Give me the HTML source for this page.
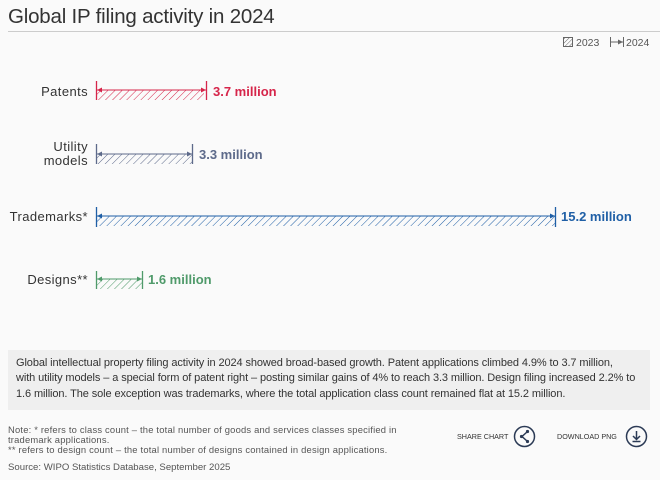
<!DOCTYPE html>
<html><head><meta charset="utf-8"><style>
*{margin:0;padding:0;box-sizing:border-box}
body{width:660px;height:480px;background:#fafafa;font-family:"Liberation Sans",sans-serif;color:#333;position:relative;overflow:hidden}
h1{position:absolute;left:8px;top:5px;font-size:20.5px;font-weight:normal;color:#333;letter-spacing:-0.2px}
.rule{position:absolute;left:8px;right:0;top:31px;height:1px;background:#ccc}
svg{position:absolute;left:0;top:0}
.box{position:absolute;left:8px;top:350px;width:642px;height:60px;background:#efefef;padding:6px 8px;font-size:11px;line-height:15.3px;color:#333;white-space:nowrap;letter-spacing:-0.1px}
.note{position:absolute;left:8px;top:425px;font-size:9.4px;line-height:10px;color:#555;white-space:nowrap;letter-spacing:0.2px}
.src{position:absolute;left:8px;top:462px;font-size:9.6px;color:#555}
.btn{position:absolute;top:432px;font-size:7.2px;color:#333}
</style></head><body>
<h1>Global IP filing activity in 2024</h1>
<div class="rule"></div>
<svg width="660" height="480">
<defs>
<pattern id="h1" width="5" height="5" patternUnits="userSpaceOnUse" patternTransform="rotate(45)"><line x1="0" y1="0" x2="0" y2="5" stroke="#d6254a" stroke-width="1"/></pattern>
<pattern id="h2" width="5" height="5" patternUnits="userSpaceOnUse" patternTransform="rotate(45)"><line x1="0" y1="0" x2="0" y2="5" stroke="#5d6a8a" stroke-width="1"/></pattern>
<pattern id="h3" width="5" height="5" patternUnits="userSpaceOnUse" patternTransform="rotate(45)"><line x1="0" y1="0" x2="0" y2="5" stroke="#1f5fa6" stroke-width="1"/></pattern>
<pattern id="h4" width="5" height="5" patternUnits="userSpaceOnUse" patternTransform="rotate(45)"><line x1="0" y1="0" x2="0" y2="5" stroke="#4f9a6a" stroke-width="1"/></pattern>
<pattern id="hl" width="3" height="3" patternUnits="userSpaceOnUse" patternTransform="rotate(45)"><line x1="0" y1="0" x2="0" y2="3" stroke="#666" stroke-width="1"/></pattern>
</defs>
<g font-size="13" font-family="Liberation Sans, sans-serif" letter-spacing="0.4">
<text x="88" y="96" text-anchor="end" fill="#333">Patents</text>
<rect x="97" y="90" width="107" height="10" fill="url(#h1)"/>
<line x1="96.5" y1="81" x2="96.5" y2="100" stroke="#d6254a" stroke-width="1.3"/>
<line x1="206.5" y1="81" x2="206.5" y2="100" stroke="#d6254a" stroke-width="1.3"/>
<line x1="97" y1="90" x2="206" y2="90" stroke="#d6254a"/>
<path d="M97 90l5-2.5v5z M206 90l-5-2.5v5z" fill="#d6254a"/>
<text x="213" y="96" fill="#d6254a" font-weight="bold" letter-spacing="0">3.7 million</text>

<text x="88" y="151" text-anchor="end" fill="#333">Utility</text>
<text x="88" y="165" text-anchor="end" fill="#333">models</text>
<rect x="97" y="154" width="95" height="10" fill="url(#h2)"/>
<line x1="96.5" y1="144" x2="96.5" y2="164" stroke="#5d6a8a" stroke-width="1.3"/>
<line x1="192.5" y1="144" x2="192.5" y2="164" stroke="#5d6a8a" stroke-width="1.3"/>
<line x1="97" y1="154" x2="192" y2="154" stroke="#5d6a8a"/>
<path d="M97 154l5-2.5v5z M192 154l-5-2.5v5z" fill="#5d6a8a"/>
<text x="199" y="159" fill="#5d6a8a" font-weight="bold" letter-spacing="0">3.3 million</text>

<text x="88" y="221" text-anchor="end" fill="#333">Trademarks*</text>
<rect x="97" y="216" width="458" height="10" fill="url(#h3)"/>
<line x1="96.5" y1="207" x2="96.5" y2="227" stroke="#1f5fa6" stroke-width="1.3"/>
<line x1="555.5" y1="207" x2="555.5" y2="227" stroke="#1f5fa6" stroke-width="1.3"/>
<line x1="97" y1="216" x2="555" y2="216" stroke="#1f5fa6"/>
<path d="M97 216l5-2.5v5z M555 216l-5-2.5v5z" fill="#1f5fa6"/>
<text x="561" y="221" fill="#1f5fa6" font-weight="bold" letter-spacing="0">15.2 million</text>

<text x="88" y="284" text-anchor="end" fill="#333">Designs**</text>
<rect x="97" y="279" width="45" height="10" fill="url(#h4)"/>
<line x1="96.5" y1="271" x2="96.5" y2="289" stroke="#4f9a6a" stroke-width="1.3"/>
<line x1="142.5" y1="271" x2="142.5" y2="289" stroke="#4f9a6a" stroke-width="1.3"/>
<line x1="97" y1="279" x2="142" y2="279" stroke="#4f9a6a"/>
<path d="M97 279l5-2.5v5z M142 279l-5-2.5v5z" fill="#4f9a6a"/>
<text x="148" y="284" fill="#4f9a6a" font-weight="bold" letter-spacing="0">1.6 million</text>
</g>
<rect x="563.5" y="37.5" width="9" height="9" fill="url(#hl)" stroke="#666"/>
<text x="576" y="46" font-size="10.5" fill="#555" font-family="Liberation Sans, sans-serif">2023</text>
<line x1="610.5" y1="37" x2="610.5" y2="47" stroke="#666"/>
<line x1="623.5" y1="37" x2="623.5" y2="47" stroke="#666"/>
<line x1="611" y1="42" x2="623" y2="42" stroke="#666"/>
<path d="M623 42l-5-2.5v5z" fill="#666"/>
<text x="626" y="46" font-size="10.5" fill="#555" font-family="Liberation Sans, sans-serif">2024</text>
<g stroke="#2b3a55" stroke-width="1.5" fill="none">
<circle cx="524.5" cy="436.5" r="10"/>
<path d="M527 432l-5 4.5 5 4.5"/>
<circle cx="636.5" cy="436.5" r="10"/>
<path d="M636.5 431v8M633 436l3.5 3.5 3.5-3.5M632.5 441.5h8"/>
</g>
<g fill="#2b3a55"><circle cx="527.5" cy="431.5" r="1.6"/><circle cx="521.5" cy="436.5" r="1.6"/><circle cx="527.5" cy="441.5" r="1.6"/></g>
</svg>
<div class="box">Global intellectual property filing activity in 2024 showed broad-based growth. Patent applications climbed 4.9% to 3.7 million,<br>with utility models – a special form of patent right – posting similar gains of 4% to reach 3.3 million. Design filing increased 2.2% to<br>1.6 million. The sole exception was trademarks, where the total application class count remained flat at 15.2 million.</div>
<div class="note">Note: * refers to class count – the total number of goods and services classes specified in<br>trademark applications.<br>** refers to design count – the total number of designs contained in design applications.</div>
<div class="src">Source: WIPO Statistics Database, September 2025</div>
<div class="btn" style="left:457px">SHARE CHART</div>
<div class="btn" style="left:557px">DOWNLOAD PNG</div>
</body></html>
